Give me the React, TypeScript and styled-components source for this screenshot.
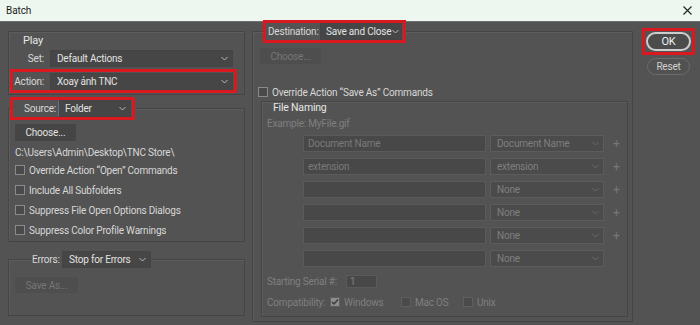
import React from 'react';
import styled, { createGlobalStyle, css } from 'styled-components';

const FONT = `Roboto, "Liberation Sans", sans-serif`;

const GlobalStyle = createGlobalStyle`
  html, body {
    margin: 0;
    padding: 0;
    background: #535353;
  }
  body {
    font-family: ${FONT};
    font-size: 10px;
    letter-spacing: -0.2px;
    color: #d8d8d8;
  }
`;

const redMark = css`
  outline: 3px solid #d9181f;
`;

const Chevron: React.FC<{ color?: string }> = ({ color = '#b9b9b9' }) => (
  <svg width="7" height="5" viewBox="0 0 7 5">
    <polyline points="0.5,1 3.5,4 6.5,1" fill="none" stroke={color} strokeWidth="1" />
  </svg>
);

const Select: React.FC<{ width: number; value: string; disabled?: boolean; focused?: boolean; tight?: boolean }> = ({
  width,
  value,
  disabled,
  focused,
  tight,
}) => (
  <StyledSelect $width={width} $disabled={disabled} $focused={focused} $tight={tight}>
    <span>{value}</span>
    <Chevron color={disabled ? '#6a6a6a' : '#b9b9b9'} />
  </StyledSelect>
);

const Check: React.FC<{ label: string; checked?: boolean; disabled?: boolean }> = ({ label, checked, disabled }) => (
  <CheckRow $disabled={disabled}>
    <Box $checked={checked} $disabled={disabled}>
      {checked && (
        <svg width="8" height="8" viewBox="0 0 8 8">
          <polyline points="1,4 3,6 7,1.5" fill="none" stroke="#3d3d3d" strokeWidth="1.5" />
        </svg>
      )}
    </Box>
    {label}
  </CheckRow>
);

const NAMING_ROWS = [
  { text: 'Document Name', choice: 'Document Name', plus: true },
  { text: 'extension', choice: 'extension', plus: true },
  { text: '', choice: 'None', plus: true },
  { text: '', choice: 'None', plus: true },
  { text: '', choice: 'None', plus: true },
  { text: '', choice: 'None', plus: false },
];

const App: React.FC = () => (
  <>
    <GlobalStyle />
    <Window>
      <TitleBar>
        <Title>Batch</Title>
        <svg width="9" height="9" viewBox="0 0 9 9">
          <path d="M0.5 0.5 L8.5 8.5 M8.5 0.5 L0.5 8.5" stroke="#222" strokeWidth="1.1" />
        </svg>
      </TitleBar>
      <Body>
        <LeftColumn>
          <PlayBox>
            <BoxTitle>Play</BoxTitle>
            <FieldRow>
              <FieldLabel>Set:</FieldLabel>
              <Select width={183} value="Default Actions" />
            </FieldRow>
            <FieldRow $marked>
              <FieldLabel>Action:</FieldLabel>
              <Select width={183} value="Xoay ảnh TNC" />
            </FieldRow>
          </PlayBox>

          <Group>
            <Legend $marked $width={119} $offset={-2} $lead={11}>
              <LegendLabel>Source:</LegendLabel>
              <Select width={73} value="Folder" focused />
            </Legend>
            <Button $width={61} $top={7}>Choose...</Button>
            <PathText>C:\Users\Admin\Desktop\TNC Store\</PathText>
            <CheckList>
              <Check label={'Override Action \u201COpen\u201D Commands'} />
              <Check label="Include All Subfolders" />
              <Check label="Suppress File Open Options Dialogs" />
              <Check label="Suppress Color Profile Warnings" />
            </CheckList>
          </Group>

          <ErrorsGroup>
            <Legend $width={120} $offset={17} $lead={0}>
              <LegendLabel>Errors:</LegendLabel>
              <Select width={89} value="Stop for Errors" />
            </Legend>
            <Button $width={63} $top={9} $height={16} disabled>
              Save As...
            </Button>
          </ErrorsGroup>
        </LeftColumn>

        <DestinationGroup>
          <Legend $marked $width={137} $offset={6} $lead={2}>
            <LegendLabel>Destination:</LegendLabel>
            <Select width={82} value="Save and Close" tight />
          </Legend>
          <Button $width={61} $top={8} $height={16} disabled>
            Choose...
          </Button>
          <OverrideRow>
            <Check label={'Override Action \u201CSave As\u201D Commands'} />
          </OverrideRow>
          <NamingBox>
            <NamingTitle>File Naming</NamingTitle>
            <MutedLine>Example: MyFile.gif</MutedLine>
            <NamingRows>
              {NAMING_ROWS.map((row, i) => (
                <NamingRow key={i}>
                  <TextField>{row.text}</TextField>
                  <Select width={114} value={row.choice} disabled />
                  <Plus $hidden={!row.plus}>+</Plus>
                </NamingRow>
              ))}
            </NamingRows>
            <SerialRow>
              <MutedLabel $width={79}>Starting Serial #:</MutedLabel>
              <SerialField>1</SerialField>
            </SerialRow>
            <CompatRow>
              <MutedLabel $width={63}>Compatibility:</MutedLabel>
              <CompatItem $width={71}>
                <Check label="Windows" checked disabled />
              </CompatItem>
              <CompatItem $width={62}>
                <Check label="Mac OS" disabled />
              </CompatItem>
              <CompatItem>
                <Check label="Unix" disabled />
              </CompatItem>
            </CompatRow>
          </NamingBox>
        </DestinationGroup>

        <ButtonColumn>
          <MarkSlot>
            <PillButton $primary>OK</PillButton>
          </MarkSlot>
          <PillButton>Reset</PillButton>
        </ButtonColumn>
      </Body>
    </Window>
  </>
);

const Window = styled.div`
  width: 700px;
  height: 325px;
  display: flex;
  flex-direction: column;
  background: #535353;
  overflow: hidden;
`;

const TitleBar = styled.div`
  height: 21px;
  flex-shrink: 0;
  display: flex;
  align-items: center;
  justify-content: space-between;
  padding: 0 8px 0 6px;
  background: #eef7ef;
  border-bottom: 1px solid #6f6f6f;
`;

const Title = styled.div`
  font-size: 10px;
  letter-spacing: -0.1px;
  color: #1c1c1c;
`;

const Body = styled.div`
  display: flex;
  align-items: flex-start;
  padding: 1px 0 0 8px;
`;

const LeftColumn = styled.div`
  width: 237px;
  margin-top: 8px;
  display: flex;
  flex-direction: column;
`;

const etched = css`
  border: 1px solid #454545;
  box-shadow: inset 1px 1px 0 #5d5d5d;
`;

const PlayBox = styled.div`
  ${etched};
  padding: 2px 10px 4px 4px;
`;

const BoxTitle = styled.div`
  height: 14px;
  line-height: 14px;
  margin-left: 10px;
  font-size: 11px;
  color: #e6e6e6;
`;

const FieldRow = styled.div<{ $marked?: boolean }>`
  display: flex;
  align-items: center;
  height: ${({ $marked }) => ($marked ? 18 : 17)}px;
  margin-top: ${({ $marked }) => ($marked ? 5 : 2)}px;
  ${({ $marked }) => $marked && redMark};
`;

const FieldLabel = styled.div`
  width: 31px;
  margin-right: 6px;
  text-align: right;
  white-space: nowrap;
`;

const StyledSelect = styled.div<{ $width: number; $disabled?: boolean; $focused?: boolean; $tight?: boolean }>`
  box-sizing: border-box;
  width: ${({ $width }) => $width}px;
  height: 17px;
  flex-shrink: 0;
  display: flex;
  align-items: center;
  justify-content: space-between;
  padding: ${({ $tight }) => ($tight ? '0 2px 0 5px' : '0 4px 0 6px')};
  background: ${({ $disabled }) => ($disabled ? '#4b4b4b' : '#464646')};
  border: 1px solid ${({ $disabled }) => ($disabled ? '#5c5c5c' : '#444444')};
  border-left-color: ${({ $focused }) => ($focused ? '#5a7396' : undefined)};
  color: ${({ $disabled }) => ($disabled ? '#7f7f7f' : '#e2e2e2')};
  white-space: nowrap;
  overflow: hidden;
`;

const Group = styled.fieldset`
  margin: 5px 0 0;
  padding: 0 6px 1px;
  min-width: 0;
  border: 1px solid #454545;
  box-shadow: inset 1px 1px 0 #5d5d5d;
`;

const ErrorsGroup = styled(Group)`
  margin-top: 9px;
  padding-bottom: 22px;
`;

const DestinationGroup = styled(Group)`
  width: 381px;
  box-sizing: border-box;
  margin: 0 0 0 7px;
  padding: 0 4px 4px 7px;
`;

const Legend = styled.legend<{ $marked?: boolean; $width: number; $offset: number; $lead: number }>`
  box-sizing: border-box;
  display: flex;
  align-items: center;
  justify-content: space-between;
  width: ${({ $width }) => $width}px;
  height: 17px;
  margin-left: ${({ $offset }) => $offset}px;
  padding: 0 1px 0 ${({ $lead }) => $lead}px;
  background: #535353;
  ${({ $marked }) => $marked && redMark};
`;

const LegendLabel = styled.span`
  white-space: nowrap;
`;

const Button = styled.div<{ $width: number; $top: number; $height?: number; disabled?: boolean }>`
  width: ${({ $width }) => $width}px;
  height: ${({ $height = 17 }) => $height}px;
  margin-top: ${({ $top }) => $top}px;
  display: flex;
  align-items: center;
  justify-content: center;
  background: ${({ disabled }) => (disabled ? '#4e4e4e' : '#454545')};
  color: ${({ disabled }) => (disabled ? '#767676' : '#e2e2e2')};
`;

const PathText = styled.div`
  margin-top: 6px;
  height: 12px;
  line-height: 12px;
  white-space: nowrap;
`;

const CheckList = styled.div`
  margin-top: 1px;
  display: flex;
  flex-direction: column;
`;

const CheckRow = styled.div<{ $disabled?: boolean }>`
  height: 20px;
  display: flex;
  align-items: center;
  gap: 4px;
  white-space: nowrap;
  color: ${({ $disabled }) => ($disabled ? '#7f7f7f' : '#d8d8d8')};
`;

const Box = styled.span<{ $checked?: boolean; $disabled?: boolean }>`
  box-sizing: border-box;
  width: 10px;
  height: 10px;
  display: inline-flex;
  align-items: center;
  justify-content: center;
  border: 1px solid ${({ $disabled }) => ($disabled ? '#5f5f5f' : '#8a8a8a')};
  background: ${({ $checked }) => ($checked ? '#8e8e8e' : '#4a4a4a')};
`;

const OverrideRow = styled.div`
  margin: 18px 0 0 -2px;
`;

const NamingBox = styled.div`
  ${etched};
  margin: -1px 0 0 1px;
  padding: 0 6px 7px 5px;
`;

const NamingTitle = styled.div`
  height: 11px;
  line-height: 11px;
  margin-left: 6px;
  font-size: 10.5px;
  color: #e6e6e6;
`;

const MutedLine = styled.div`
  height: 12px;
  line-height: 12px;
  margin-top: 5px;
  color: #7f7f7f;
`;

const NamingRows = styled.div`
  margin: 5px 0 0 36px;
  display: flex;
  flex-direction: column;
  gap: 6px;
`;

const NamingRow = styled.div`
  display: flex;
  align-items: center;
  gap: 4px;
`;

const TextField = styled.div`
  box-sizing: border-box;
  width: 183px;
  height: 17px;
  display: flex;
  align-items: center;
  padding-left: 4px;
  background: #484848;
  border: 1px solid #5a5a5a;
  color: #7a7a7a;
`;

const Plus = styled.span<{ $hidden?: boolean }>`
  margin-left: 5px;
  font-size: 12px;
  color: #777777;
  visibility: ${({ $hidden }) => ($hidden ? 'hidden' : 'visible')};
`;

const SerialRow = styled.div`
  margin-top: 8px;
  height: 13px;
  display: flex;
  align-items: center;
`;

const MutedLabel = styled.span<{ $width: number }>`
  width: ${({ $width }) => $width}px;
  flex-shrink: 0;
  color: #7f7f7f;
  white-space: nowrap;
`;

const SerialField = styled.div`
  box-sizing: border-box;
  width: 31px;
  height: 13px;
  padding-left: 3px;
  line-height: 11px;
  background: #484848;
  border: 1px solid #5a5a5a;
  color: #808080;
`;

const CompatRow = styled.div`
  margin-top: 7px;
  height: 14px;
  display: flex;
  align-items: center;
`;

const CompatItem = styled.div<{ $width?: number }>`
  width: ${({ $width }) => ($width ? `${$width}px` : 'auto')};
  flex-shrink: 0;
`;

const ButtonColumn = styled.div`
  margin: 8px 0 0 12px;
  display: flex;
  flex-direction: column;
  align-items: flex-start;
  gap: 6px;
`;

const MarkSlot = styled.div`
  padding: 1px;
  ${redMark};
`;

const PillButton = styled.div<{ $primary?: boolean }>`
  box-sizing: border-box;
  width: ${({ $primary }) => ($primary ? 45 : 43)}px;
  height: ${({ $primary }) => ($primary ? 19 : 17)}px;
  margin-left: ${({ $primary }) => ($primary ? 0 : 2)}px;
  display: flex;
  align-items: center;
  justify-content: center;
  border-radius: 10px;
  border: ${({ $primary }) => ($primary ? '2px solid #cdcdcd' : '1px solid #6c6c6c')};
  background: ${({ $primary }) => ($primary ? '#4c4c4c' : '#525252')};
  color: ${({ $primary }) => ($primary ? '#f0f0f0' : '#d0d0d0')};
  font-size: ${({ $primary }) => ($primary ? 11 : 10)}px;
`;

export default App;
